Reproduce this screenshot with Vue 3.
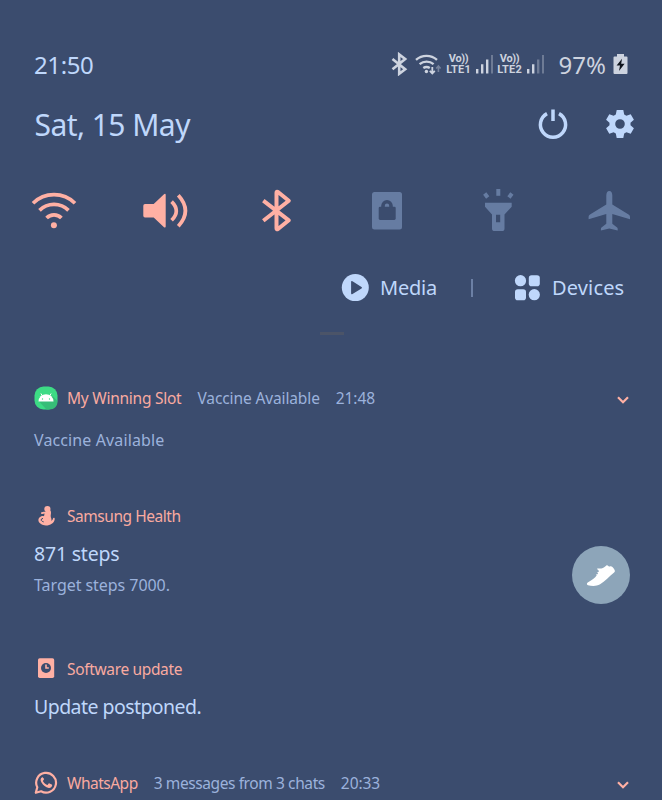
<script setup>
const apps = [
  { id: 'slot', name: 'My Winning Slot', note: 'Vaccine Available', time: '21:48', body: 'Vaccine Available' },
  { id: 'health', name: 'Samsung Health', title: '871 steps', sub: 'Target steps 7000.' },
  { id: 'update', name: 'Software update', title: 'Update postponed.' },
  { id: 'whatsapp', name: 'WhatsApp', note: '3 messages from 3 chats', time: '20:33' }
]
</script>

<template>
  <main class="shade">
    <header class="status">
      <span class="clock">21:50</span>
      <div class="signals">
        <svg class="bt" width="18" height="24" viewBox="0 0 18 24"><path d="M2.500 7 15.200 17.300 9.200 21.800V2.400L15.200 7 2.500 17.300" /></svg>
        <svg class="wifi" width="28" height="24" viewBox="0 0 28 24">
          <path d="M1 7.8a16 16 0 0 1 21 0M4.600 12.100a11 11 0 0 1 14 0M8.300 16.100a6 6 0 0 1 6.500 0" />
          <circle cx="11.4" cy="19.5" r="1.7" />
          <path class="down" d="M17.3 15v6M14.8 18.8l2.5 2.6 2.5-2.6" />
          <path class="up" d="M23.4 20v-6M21.2 16.5l2.2-2.5 2.2 2.5" />
        </svg>
        <div v-for="n in 2" :key="n" class="sim">
          <div class="volte"><span>Vo))</span><span class="lte">LTE{{ n }}</span></div>
          <svg width="18" height="24" viewBox="0 0 18 24">
            <path d="M1 17h2.4v4.500H1zM6 12.300h2.400v9.200H6z" />
            <path :class="{ dim: n === 2 }" d="M11 7.500h2.400v14H11z" />
            <path class="dim" d="M16 3h2v18.500h-2z" />
          </svg>
        </div>
        <span class="percent">97%</span>
        <svg class="battery" width="15" height="22" viewBox="0 0 15 22">
          <path d="M4 1h7v2.400h2.500q1 0 1 1V20q0 1-1 1h-12q-1 0-1-1V4.400q0-1 1-1H4z" />
          <path class="bolt" d="M9 5.800 3.600 12.500H7L6 18l5.600-7.200H8.200z" />
        </svg>
      </div>
    </header>

    <div class="date-row">
      <h1>Sat, 15 May</h1>
      <svg class="power" width="32" height="32" viewBox="0 0 32 32"><path d="M10 5.600a12.600 12.600 0 1 0 12 0M16 1.500v11.500" /></svg>
      <svg class="gear" width="32" height="32" viewBox="0 0 32 32">
        <path fill-rule="evenodd" d="M12.700 2h6.600l.9 4.400 2.200 1.300 4.300-1.500 3.200 5.600-3.400 3v2.500l3.400 3-3.200 5.500-4.300-1.500-2.200 1.300-.9 4.400h-6.600l-.9-4.400-2.200-1.300-4.300 1.500-3.200-5.500 3.400-3v-2.500l-3.400-3 3.200-5.600 4.300 1.500 2.200-1.300zM16 11.200a4.800 4.800 0 1 0 0 9.600 4.800 4.800 0 0 0 0-9.600z" />
      </svg>
    </div>

    <nav class="tiles">
      <svg viewBox="0 0 48 48" class="line">
        <path d="M3 16.300a30 30 0 0 1 42 0M9.500 23.400a20.500 20.500 0 0 1 29 0M16.600 31a10.200 10.200 0 0 1 14.800 0" />
        <circle cx="23.900" cy="38.300" r="3" />
      </svg>
      <svg viewBox="0 0 48 48" class="line">
        <path class="solid" d="M4 17h8.700L23 7.200q1.700-1 1.700.8v31.400q0 1.800-1.700.8L12.700 30.400H4q-1.700 0-1.700-1.700v-10q0-1.700 1.700-1.700z" />
        <path d="M30.600 14.600q9.400 9.300 0 18.600M37.300 8.300q14.200 15.600 0 31" />
      </svg>
      <svg viewBox="0 0 48 48" class="line heavy"><path stroke-linejoin="round" d="M11.300 13.700 36.800 33.300 26 42q-1.500.8-1.500-.8V5.800q0-1.700 1.500-.8L36.800 13.700 11.300 33.700" /></svg>
      <svg viewBox="0 0 48 48" class="off">
        <rect x="9" y="5" width="30" height="37.500" rx="2.500" />
        <rect class="hole" x="15.700" y="19.700" width="17" height="13.300" rx="1.400" />
        <path class="shackle" d="M20 20.500v-1.700a4 4 0 0 1 8 0v1.700" />
      </svg>
      <svg viewBox="0 0 48 48" class="off">
        <path fill-rule="evenodd" d="M11 15.700h26.700v4L30.500 27.500v14q0 2.600-2.600 2.600h-7.200q-2.700 0-2.700-2.600v-14L11 19.700zM22 27.700v7.500h4.200v-7.500z" />
        <path d="M22.300 2h4v6.800h-4z" />
        <path class="ray" d="m10.700 6.500 3 4M37.900 6.500l-3 4" />
      </svg>
      <svg viewBox="0 0 48 48" class="off">
        <path d="M24.300 4c-2 0-3 2-3 4.500v9L5 27.400q-1.400.8-1.400 2.300v2.600L21.300 27v9.800l-4.800 3.700q-.6.500-.6 1.400v1.600l8.400-1.900 8.400 1.900v-1.600q0-.9-.6-1.400l-4.800-3.700V27L45 32.300v-2.600q0-1.500-1.400-2.300L27.300 17.500v-9c0-2.500-1-4.500-3-4.500z" />
      </svg>
    </nav>

    <div class="panels">
      <svg width="28" height="28" viewBox="0 0 28 28"><circle cx="14.300" cy="13.600" r="13.500" /><path class="hole" d="M10.100 7.900v11.400q0 1.600 1.400.7l9-5.500q1.100-.8 0-1.600l-9-5.600q-1.400-.9-1.400.6z" /></svg>
      <span class="media">Media</span>
      <i class="divider"></i>
      <svg width="26" height="26" viewBox="0 0 26 26"><circle cx="6.500" cy="5.700" r="5.600" /><rect x="14.800" y=".2" width="11" height="11" rx="2.800" /><rect x="1" y="14.200" width="11" height="11" rx="2.800" /><circle cx="20.300" cy="19.700" r="5.600" /></svg>
      <span class="devices">Devices</span>
    </div>
    <div class="handle"></div>

    <article v-for="app in apps" :key="app.id" :class="['card', app.id]">
      <div class="head">
        <svg v-if="app.id === 'slot'" class="icon" viewBox="0 0 24 24">
          <rect class="green" x=".5" y=".5" width="23" height="23" rx="9" />
          <path class="shadow" d="M5 15.500 12.500 23.500H15c5.500 0 8.500-3 8.500-8.500L18 9.500z" />
          <path class="white" d="M4.500 15.600a7.400 7.300 0 0 1 15 0z" />
          <path class="antenna" d="M8.500 10.200 6.900 7.500M15.500 10.200l1.600-2.700" />
          <circle class="green" cx="8.500" cy="13" r=".7" /><circle class="green" cx="15.500" cy="13" r=".7" />
        </svg>
        <svg v-else-if="app.id === 'health'" class="icon" viewBox="0 0 24 24">
          <circle cx="13.400" cy="5" r="3.100" />
          <path d="M12.500 7.200c-1.800 1.100-3.500.2-5 1.100-1.100.8-.4 2 .8 1.700l2.300-.4-.6 2.600c-2.500-.6-5.700 1.100-5.600 4.100 0 2.700 3.600 5.200 7.500 5.200 4.500 0 8.200-2.400 8.800-6.300.2-1.700-1.500-1.900-1.800-.4-.2 1-.7 1.700-1.600 1.900.7-1.700-.7-3-.6-4.700.2-2.100 1-4.800-.9-6z" />
          <path class="crease" d="M9 14.400q-2.300.3-1.800 1.900.8 1.300 2.500 1.600" />
        </svg>
        <svg v-else-if="app.id === 'update'" class="icon" viewBox="0 0 24 24">
          <rect x="4" y="1.300" width="16.200" height="19.600" rx="1.700" /><circle class="hole" cx="12" cy="11" r="5" /><path class="hand" d="M12 7.600V11h2.800" />
        </svg>
        <svg v-else class="icon" viewBox="0 0 24 24">
          <path class="bubble" d="m1.800 21.800 1.500-5.500A9.900 9.900 0 1 1 7.100 20.300z" />
          <path d="M8.100 6.300c-1.900 1-1.900 3.200-.6 5.200 1.700 2.700 4.100 4.900 7.300 5.400 1.600.2 3.300-1 3.400-2.700 0-.4-.2-.6-.5-.8l-2.200-1c-.4-.2-.7-.1-1 .3l-.8 1c-.3.300-.6.300-1 .1-1.700-.8-2.900-2-3.700-3.500-.2-.4-.1-.6.200-.9l.7-.9c.2-.3.200-.5.100-.8L9 6.800c-.2-.5-.4-.6-.9-.5z" />
        </svg>
        <span class="name">{{ app.name }}</span>
        <span v-if="app.note" class="note">{{ app.note }}</span>
        <span v-if="app.time" class="time">{{ app.time }}</span>
        <svg v-if="app.note" class="chevron" width="14" height="14" viewBox="0 0 14 14"><path d="m2 6.200 5 5 5-5" /></svg>
      </div>
      <p v-if="app.body" class="body">{{ app.body }}</p>
      <div v-if="app.title" class="content">
        <div><p class="title">{{ app.title }}</p><p v-if="app.sub" class="sub">{{ app.sub }}</p></div>
        <div v-if="app.sub" class="shoe">
          <svg width="58" height="58" viewBox="0 0 58 58"><path d="m25.300 22.300c3 .7 6 .2 8.800-2.500.6-.6 1.500-.6 2.200.1.900.8 2 .3 3.200.5 1.300.5 2.500 2 3.200 3.800.4 1 .1 1.600-.6 2.200-5.500 4.200-9 8.900-14 11.900-4 2.400-8.600 1.800-12.100 1-1.300-.3-1.500-1.900-.3-2.700 4-2.600 7.500-4.400 9-7.400l-.8-.8 1.600-.2.600-1.100-1.200-1 1.600-.1.500-1.200-1.300-.9z" /></svg>
        </div>
      </div>
    </article>
  </main>
</template>

<style>
body { background: #3b4c6e; }
</style>

<style scoped>
* { box-sizing: border-box; }
.shade { width: 662px; height: 800px; overflow: hidden; padding-top: 50px; background: #3b4c6e; color: #bfd7fb; font-family: "Noto Sans", sans-serif; white-space: nowrap; }
h1, p { margin: 0; font-weight: 400; }
svg { display: block; flex: none; fill: currentColor; }
.hole { fill: #3b4c6e; }

.status { display: flex; justify-content: space-between; height: 28px; padding: 0 34px; align-items: center; }
.clock { font-size: 24px; letter-spacing: -.4px; }
.signals { display: flex; align-items: center; color: #cdd3df; }
.bt { fill: none; stroke: currentColor; stroke-width: 2.600; margin-right: 7px; }
.wifi { margin-right: 1px; }
.wifi path { fill: none; stroke: currentColor; stroke-width: 2.400; }
.wifi .down { stroke-width: 1.800; }
.wifi .up { stroke-width: 1.600; opacity: .4; }
.sim { display: flex; align-items: center; gap: 2px; width: 51px; }
.volte { display: flex; flex-direction: column; align-items: center; width: 29px; font: 700 11px/11px Roboto, sans-serif; letter-spacing: -.3px; }
.lte { letter-spacing: .2px; }
.dim { opacity: .35; }
.percent { margin: 0 7px 0 12.500px; font-size: 24px; letter-spacing: 0; }
.bolt { fill: #10151e; }

.date-row { display: flex; align-items: center; height: 40px; margin-top: 27px; padding: 0 26px 0 34.500px; }
.date-row svg { margin-bottom: 2px; }
h1 { flex: 1; font-size: 30px; line-height: 40px; letter-spacing: -.55px; }
.power { fill: none; stroke: currentColor; stroke-width: 3.500; margin-right: 35px; }

.tiles { display: flex; gap: 63px; margin-top: 42px; padding-left: 30px; color: #ffb0a4; }
.tiles svg { width: 48px; height: 48px; }
.line { stroke: currentColor; stroke-width: 3.700; }
.heavy { stroke-width: 4; }
.line path { fill: none; }
.line .solid { fill: currentColor; stroke: none; }
.line circle { stroke: none; }
.off { color: #667ca2; }
.ray { stroke: currentColor; stroke-width: 4; }
.shackle { fill: none; stroke: #3b4c6e; stroke-width: 3.600; }

.panels { display: flex; align-items: center; height: 40px; margin-top: 33px; padding-left: 341px; font-size: 20px; }
.media { width: 91px; margin-left: 11px; padding-bottom: 2px; letter-spacing: -.2px; }
.divider { width: 2px; height: 18px; margin-right: 41px; background: #6c80a5; }
.devices { margin-left: 12px; padding-bottom: 2px; letter-spacing: .15px; }
.handle { width: 24px; height: 3px; margin: 24px 0 0 320px; background: #4b5468; }

.card { padding: 0 32px 0 34px; }
.slot { margin-top: 48px; }
.health { margin-top: 46px; }
.update { margin-top: 50px; }
.whatsapp { margin-top: 46px; }
.head { display: flex; align-items: center; height: 30px; color: #9bb2dc; font-size: 15.500px; letter-spacing: -.25px; }
.icon { width: 24px; height: 24px; color: #ffb0a4; }
.name { margin-left: 9px; color: #f9aaa0; }
.health .name { letter-spacing: -.45px; }
.update .name { letter-spacing: -.34px; }
.whatsapp .name { letter-spacing: -.5px; }
.slot .note { letter-spacing: -.12px; }
.whatsapp .note { letter-spacing: -.4px; }
.note, .time { margin-left: 16px; }
.time { letter-spacing: -.08px; }
.chevron { margin-left: auto; fill: none; stroke: #ffb0a4; stroke-width: 2.200; }
.body { height: 30px; margin-top: 12px; color: #9bb2dc; font-size: 16px; line-height: 30px; letter-spacing: .12px; }
.content { display: flex; justify-content: space-between; margin-top: 8px; }
.title { height: 30px; font-size: 19.500px; line-height: 30px; letter-spacing: -.2px; }
.update .title { letter-spacing: -.55px; }
.sub { height: 31px; color: #9bb2dc; font-size: 16px; line-height: 32px; letter-spacing: -.05px; }
.shoe { width: 58px; height: 58px; margin-top: 7px; border-radius: 50%; background: #8da5b9; color: #fff; }
.green { fill: #3ddb85; }
.shadow { fill: #37bd78; }
.white { fill: #fff; }
.antenna { stroke: #fff; stroke-width: 1; }
.crease { fill: none; stroke: #3b4c6e; stroke-width: 1; }
.hand { fill: none; stroke: #ffb0a4; stroke-width: 1.600; }
.bubble { fill: none; stroke: currentColor; stroke-width: 2.200; stroke-linejoin: round; }
</style>
